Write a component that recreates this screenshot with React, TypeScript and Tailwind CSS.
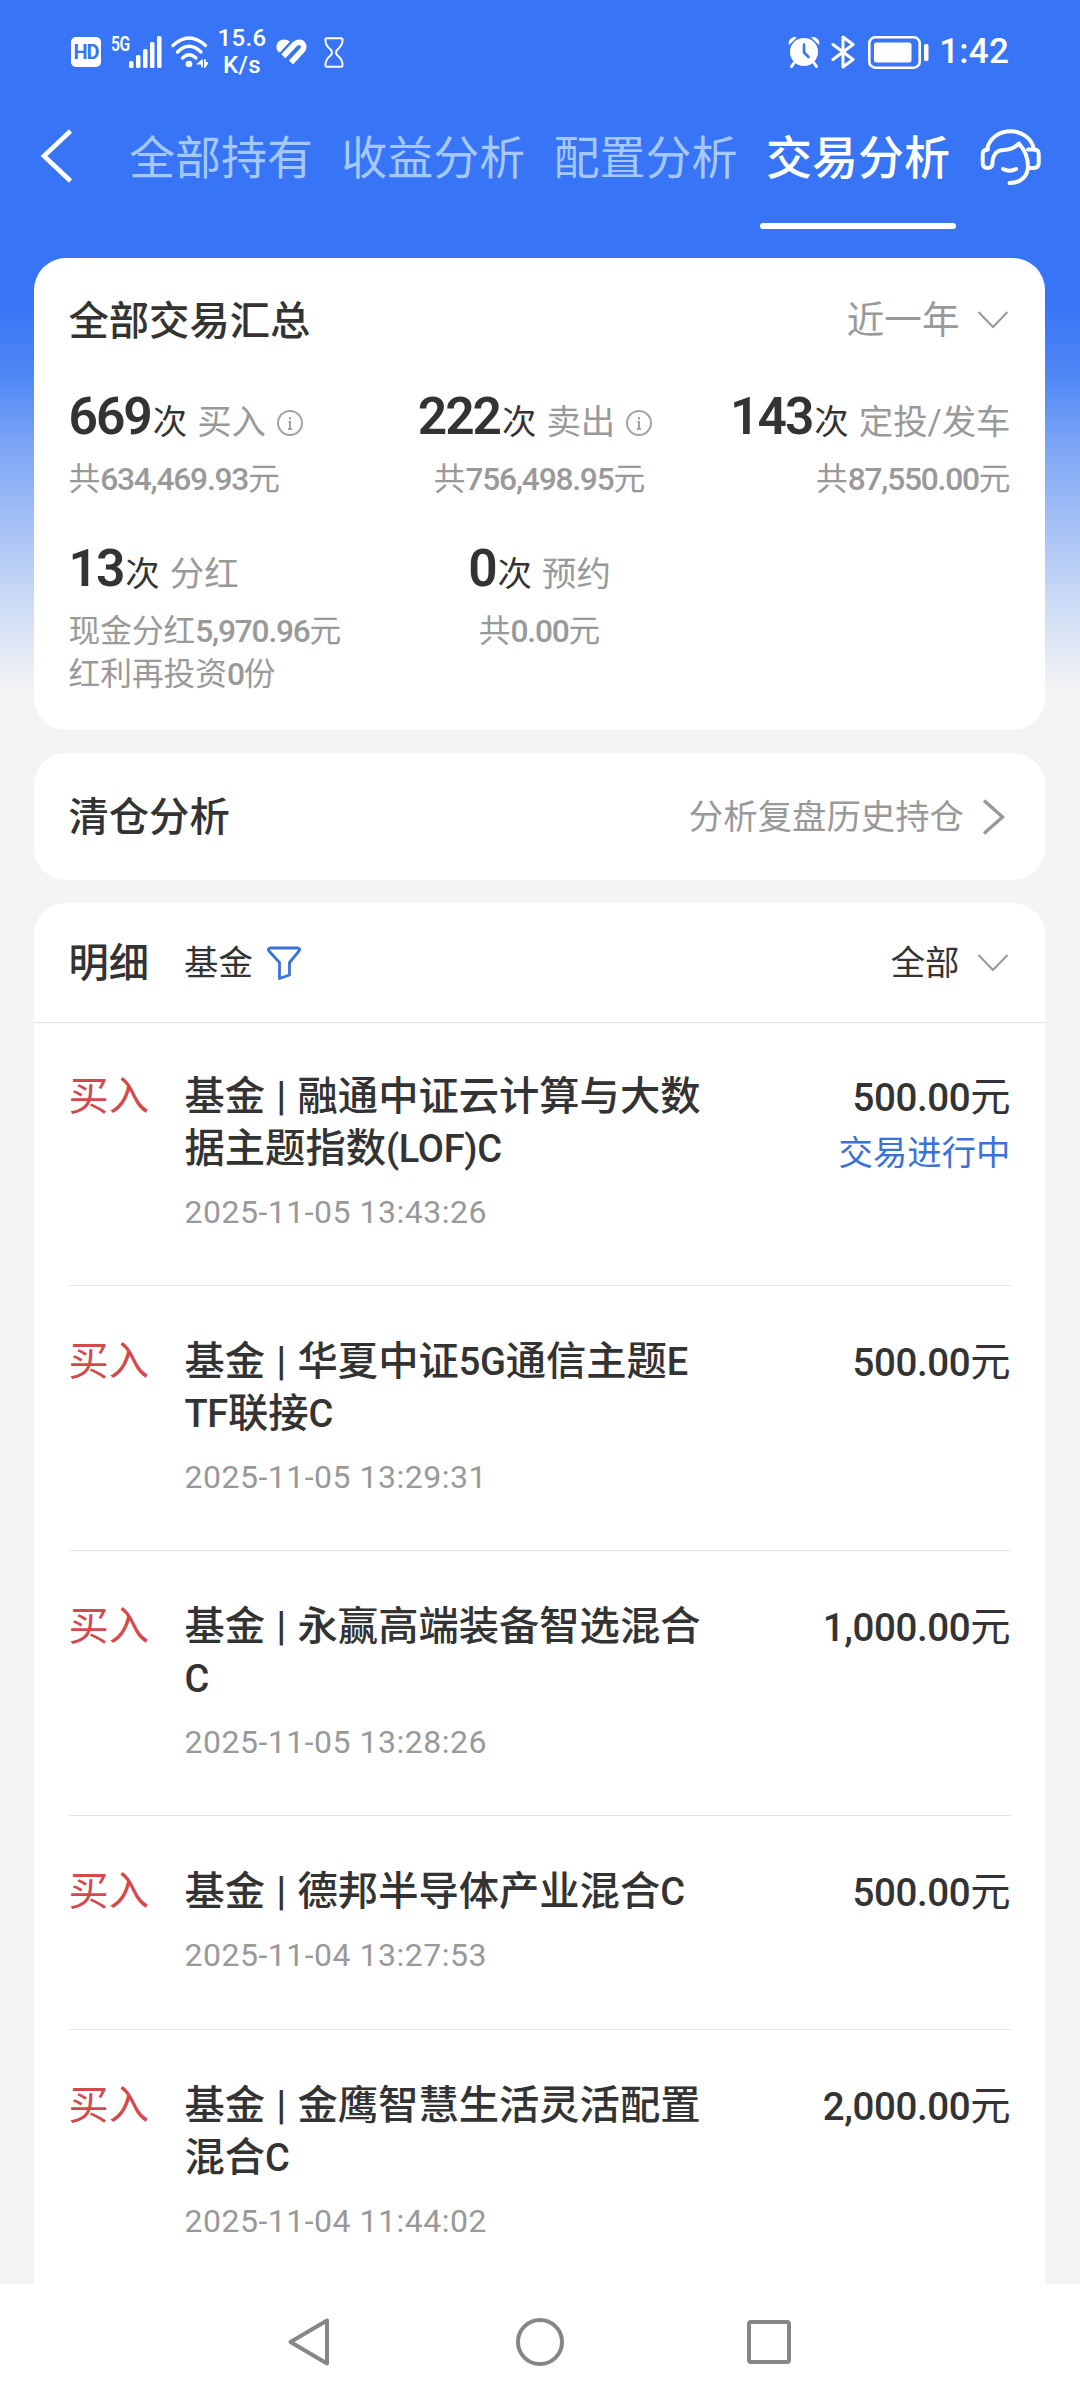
import type { ReactNode } from "react";

type Trade = { lines: string[]; time: string; amount: string; status?: string };

const trades: Trade[] = [
  {
    lines: ["基金 | 融通中证云计算与大数", "据主题指数(LOF)C"],
    time: "2025-11-05 13:43:26",
    amount: "500.00",
    status: "交易进行中",
  },
  {
    lines: ["基金 | 华夏中证5G通信主题E", "TF联接C"],
    time: "2025-11-05 13:29:31",
    amount: "500.00",
  },
  {
    lines: ["基金 | 永赢高端装备智选混合", "C"],
    time: "2025-11-05 13:28:26",
    amount: "1,000.00",
  },
  { lines: ["基金 | 德邦半导体产业混合C"], time: "2025-11-04 13:27:53", amount: "500.00" },
  {
    lines: ["基金 | 金鹰智慧生活灵活配置", "混合C"],
    time: "2025-11-04 11:44:02",
    amount: "2,000.00",
  },
];

function StatusBar() {
  return (
    <div className="flex h-[104px] items-center justify-between pr-[71px] pl-[71px] text-white">
      <div className="flex items-center">
        <div className="flex h-[30px] w-[30px] items-center justify-center rounded-[5px] bg-white text-[20px] leading-none font-bold tracking-[-1px] text-[#3874f6]">
          HD
        </div>
        <div className="ml-[10px] -mt-[16px] w-[18px]">
          <div className="w-[24px] origin-left scale-x-[0.78] text-[20px] leading-[16px] font-semibold tracking-[-0.5px]">5G</div>
        </div>
        <svg className="h-[32px] w-[33px]" viewBox="0 0 33 32" fill="currentColor">
          <rect x="0" y="25" width="4.5" height="7" rx="1.5" />
          <rect x="7" y="19" width="4.5" height="13" rx="1.5" />
          <rect x="14" y="13" width="4.5" height="19" rx="1.5" />
          <rect x="21" y="6" width="4.5" height="26" rx="1.5" />
          <rect x="28" y="0" width="4.5" height="32" rx="1.5" />
        </svg>
        <svg className="ml-[9px] h-[32px] w-[37px]" viewBox="0 0 37 32" fill="none" stroke="currentColor" strokeWidth="3.3" strokeLinecap="round">
          <path d="M2 9.500 Q18 -5.500 34.500 9.500" />
          <path d="M6.500 16 Q18 4.500 30 16" />
          <path d="M11.500 22 Q18 15.500 25 22" />
          <circle cx="18" cy="28" r="3.300" fill="currentColor" stroke="none" />
          <path d="M31 24.500 V30.500 M31 24.500 L27.500 27.500 H31 M34 24 V30.500 L36.500 27 H34" strokeWidth="1.800" />
        </svg>
        <div className="ml-[6px] w-[56px] text-center text-[24px] leading-[27px] font-medium tracking-[0.3px]">
          15.6
          <br />
          K/s
        </div>
        <svg className="ml-[6px] h-[27px] w-[31px]" viewBox="0 0 31 27" fill="none" stroke="currentColor">
          <path d="M1.500 12 C-0.500 9 0.300 3.500 4 1.500 C7 -0.300 11.500 0.300 14 2.600 L3.800 13.400 Z" fill="currentColor" stroke="none" />
          <path d="M7.300 17.300 L18 6 C21.500 2.300 25.500 2.800 27 5.300 C28.500 8 27.500 10 26 11.700 L15 23.500" strokeWidth="5.600" />
        </svg>
        <svg className="ml-[17px] h-[31px] w-[20px]" viewBox="0 0 20 31" fill="none" stroke="currentColor" strokeWidth="2" strokeLinejoin="round">
          <path d="M3 1.200 H17 Q19 1.200 18.500 4 Q18 9 13.500 12.500 Q10.500 15.500 13.500 18.500 Q18 22 18.500 27 Q19 29.800 17 29.800 H3 Q1 29.800 1.500 27 Q2 22 6.500 18.500 Q9.500 15.500 6.500 12.500 Q2 9 1.500 4 Q1 1.200 3 1.200 Z" />
        </svg>
      </div>
      <div className="flex items-center">
        <svg className="h-[32px] w-[32px]" viewBox="0 0 32 32" fill="currentColor">
          <path d="M1 9 A6 6 0 0 1 9 1.500 Z M31 9 A6 6 0 0 0 23 1.500 Z" />
          <circle cx="16" cy="16" r="14" />
          <path d="M6 27 L3.500 30.500 M26 27 L28.500 30.500" stroke="currentColor" strokeWidth="3" strokeLinecap="round" />
          <path d="M16 8.500 V16.500 L20.500 21" fill="none" stroke="#3874f6" strokeWidth="2.600" strokeLinecap="round" />
        </svg>
        <svg className="ml-[11px] h-[34px] w-[24px]" viewBox="0 0 24 34" fill="none" stroke="currentColor" strokeWidth="3" strokeLinejoin="round" strokeLinecap="round">
          <path d="M2 9.500 L22 24.500 L12 32 V2 L22 9.500 L2 24.500" />
        </svg>
        <svg className="ml-[13px] h-[33px] w-[61px]" viewBox="0 0 61 33" fill="none">
          <rect x="1.300" y="1.300" width="50.400" height="30.400" rx="6" stroke="currentColor" strokeWidth="2.600" />
          <rect x="6" y="6.500" width="37.500" height="20" rx="2.500" fill="currentColor" />
          <rect x="56" y="8" width="4.500" height="17" rx="1.500" fill="currentColor" />
        </svg>
        <div className="ml-[10px] text-[35px] leading-[40px] font-medium tracking-[0.200px]">1:42</div>
      </div>
    </div>
  );
}

function NavTabs() {
  return (
    <div className="flex h-[154px] items-start pl-[40px] text-[46px] leading-[60px]">
      <svg className="mt-[25px] h-[54px] w-[34px]" viewBox="0 0 34 54" fill="none" stroke="white" strokeWidth="4.600">
        <path d="M30.500 2 L4 27 L30.500 52" />
      </svg>
      <div className="mt-[24px] ml-[55px] flex gap-[28.300px] text-[#a4c8ff]">
        <span>全部持有</span>
        <span>收益分析</span>
        <span>配置分析</span>
        <div className="relative font-medium text-white">
          交易分析
          <div className="absolute top-[95px] left-1/2 h-[6px] w-[196px] -translate-x-1/2 rounded-full bg-white" />
        </div>
      </div>
      <svg className="mt-[24px] ml-[30px] h-[58px] w-[62px]" viewBox="0 0 62 58" fill="none" stroke="white" strokeWidth="4" strokeLinecap="round" strokeLinejoin="round">
        <path d="M7 21.500 C9 10.500 19 3.300 30.500 3.300 C42 3.300 52 10.500 54 21.500" />
        <path d="M8 21.500 Q2.700 21.500 2.700 26 V35 Q2.700 40 7.500 40 Q12.500 40 12.500 35.500 C12.500 26.500 17 22 24 22 C31 22 35 19.500 39 15.500 C45 22.500 48 29 48 38 C48 48 41 55 29.500 55" />
        <path d="M48 21.500 H54 Q58.700 21.500 58.700 26 V35 Q58.700 40 53.500 40 H48" />
        <path d="M23 41 Q29.500 44.500 36 41" />
      </svg>
    </div>
  );
}

function ChevronDown() {
  return (
    <svg className="mr-[2px] ml-[17px] h-[20px] w-[32px]" viewBox="0 0 32 20" fill="none" stroke="#999" strokeWidth="2">
      <path d="M1.500 2 L16 17 L30.500 2" />
    </svg>
  );
}

function InfoIcon() {
  return (
    <svg className="mr-[9px] ml-[11px] h-[26px] w-[26px] translate-y-[2px]" viewBox="0 0 26 26" fill="none" stroke="#a3a3a3" strokeWidth="2">
      <circle cx="13" cy="13" r="12" />
      <path d="M13 7 V9.500 M11.500 12 H13 V19 M11 19 H15" />
    </svg>
  );
}

function Stat({ count, label, info, className, children }: { count: string; label: string; info?: boolean; className: string; children: ReactNode }) {
  return (
    <div className={"flex flex-col " + className}>
      <div className="flex h-[60px] items-baseline text-[34.400px] leading-[60px] whitespace-nowrap">
        <span className="text-[51.500px] font-semibold tracking-[-2px] text-[#333]">{count}</span>
        <span className="ml-[2px] text-[#333]">次</span>
        <span className="ml-[10px] text-[#999]">{label}</span>
        {info && <InfoIcon />}
      </div>
      <div className="mt-[11px] text-[31.700px] leading-[43px] whitespace-nowrap text-[#999]">{children}</div>
    </div>
  );
}

function Num({ children }: { children: string }) {
  return <span className="font-medium tracking-[-1.200px]">{children}</span>;
}

function Heading({ children }: { children: string }) {
  return <h2 className="mt-[3px] text-[40.300px] leading-[60px] font-medium text-[#333]">{children}</h2>;
}

function Summary() {
  return (
    <section className="h-[472px] rounded-[32px] bg-white px-[34.500px]">
      <div className="flex h-[124px] items-center justify-between">
        <Heading>全部交易汇总</Heading>
        <div className="flex items-center text-[37.600px] leading-[60px] text-[#999]">
          近一年
          <ChevronDown />
        </div>
      </div>
      <div className="mt-[5px] grid grid-cols-3 gap-y-[38px]">
        <Stat count="669" label="买入" info className="items-start">
          共<Num>634,469.93</Num>元
        </Stat>
        <Stat count="222" label="卖出" info className="items-center">
          共<Num>756,498.95</Num>元
        </Stat>
        <Stat count="143" label="定投/发车" className="items-end">
          共<Num>87,550.00</Num>元
        </Stat>
        <Stat count="13" label="分红" className="items-start">
          现金分红<Num>5,970.96</Num>元
          <br />
          红利再投资<Num>0</Num>份
        </Stat>
        <Stat count="0" label="预约" className="items-center">
          共<Num>0.00</Num>元
        </Stat>
      </div>
    </section>
  );
}

/* Latin runs are set slightly smaller than the Chinese text around them. */
function TitleLine({ text }: { text: string }) {
  return (
    <div>
      {text.split(/([A-Z0-9()]+)/).map((part, i) =>
        i % 2 ? (
          <span key={i} className="text-[38px] tracking-[-0.300px]">
            {part}
          </span>
        ) : (
          part
        ),
      )}
    </div>
  );
}

function TradeRow({ trade }: { trade: Trade }) {
  return (
    <div className="flex min-h-[214px] border-b border-[#e3e3e3] pt-[50px] pb-[47px] leading-[52px] first:pt-[48px]">
      <div className="w-[116px] text-[40.300px] text-[#d4494c]">买入</div>
      <div className="flex-1">
        <div className="text-[40.300px] font-medium whitespace-nowrap text-[#333] [word-spacing:1.200px]">
          {trade.lines.map((line) => (
            <TitleLine key={line} text={line} />
          ))}
        </div>
        <div className="mt-[11px] text-[32px] leading-[52px] tracking-[0.500px] text-[#999]">{trade.time}</div>
      </div>
      <div className="mt-px text-right text-[#333]">
        <div className="text-[38.500px] font-medium tracking-[-0.400px]">
          {trade.amount}
          <span className="text-[40.300px] font-normal tracking-normal">元</span>
        </div>
        {trade.status && <div className="mt-[3px] text-[34.400px] text-[#3a72d8]">{trade.status}</div>}
      </div>
    </div>
  );
}

export default function App() {
  return (
    <div className="h-[2400px] w-[1080px] overflow-hidden bg-[#f4f4f4] font-['Roboto','Noto_Sans_CJK_SC',sans-serif]">
      <div className="h-[2284px] overflow-hidden bg-[linear-gradient(180deg,#3874f6_0px,#3874f6_300px,#4c86f5_370px,#84aaf5_460px,#bcd0f5_570px,#f4f4f4_690px)]">
        <StatusBar />
        <NavTabs />
        <main className="flex flex-col gap-[23px] pr-[35px] pl-[34px]">
          <Summary />
          <section className="flex h-[127px] items-center justify-between rounded-[32px] bg-white px-[34.500px]">
            <Heading>清仓分析</Heading>
            <div className="flex items-center text-[34.400px] leading-[60px] text-[#999]">
              分析复盘历史持仓
              <svg className="mr-[1.500px] ml-[17px] h-[36px] w-[28px]" viewBox="0 0 28 36" fill="none" stroke="#999" strokeWidth="3.400">
                <path d="M3 1.500 L21.500 18 L3 34.500" />
              </svg>
            </div>
          </section>
          <section className="rounded-t-[32px] bg-white">
            <div className="flex h-[120px] items-center border-b border-[#e0e0e0] px-[34.500px]">
              <Heading>明细</Heading>
              <div className="ml-[35px] text-[34.400px] leading-[60px] text-[#333]">基金</div>
              <svg className="ml-[14px] h-[34px] w-[34px]" viewBox="0 0 34 34" fill="none" stroke="#3a72d8" strokeWidth="2.800" strokeLinejoin="round">
                <path d="M3 2 H31 Q33.500 2.500 32 5 L22.500 16.500 V29 L12.500 32.500 V16.500 L2 5 Q0.500 2.500 3 2 Z" />
              </svg>
              <div className="ml-auto flex items-center text-[34.400px] leading-[60px] text-[#333]">
                全部
                <ChevronDown />
              </div>
            </div>
            <div className="px-[34.500px]">
              {trades.map((trade) => (
                <TradeRow key={trade.time} trade={trade} />
              ))}
            </div>
          </section>
        </main>
      </div>
      <nav className="flex h-[116px] items-center justify-center gap-[183px] bg-white">
        <svg className="h-[50px] w-[44px] -translate-x-[2px]" viewBox="0 0 44 50" fill="none" stroke="#868686" strokeWidth="4" strokeLinejoin="round">
          <path d="M40 3.500 V46.500 L3.500 25 Z" />
        </svg>
        <div className="h-[48px] w-[48px] rounded-full border-4 border-[#868686]" />
        <div className="h-[44px] w-[44px] rounded-[4px] border-4 border-[#868686]" />
      </nav>
    </div>
  );
}
